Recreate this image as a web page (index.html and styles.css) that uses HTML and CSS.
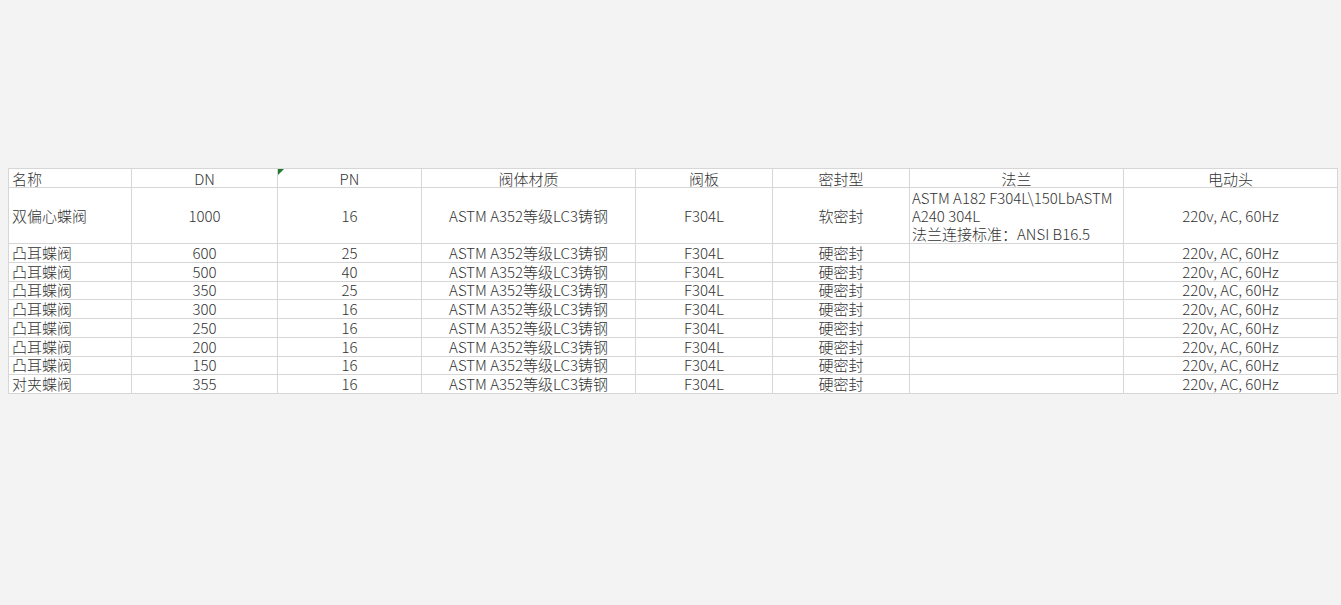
FILE: index.html
```html
<!DOCTYPE html>
<html lang="zh-CN">
<head>
<meta charset="utf-8">
<title>蝶阀</title>
<link rel="stylesheet" href="styles.css">
</head>
<body>
<div class="page">
  <div class="sheet">
    <div class="c l h">名称</div>
    <div class="c h">DN</div>
    <div class="c h flag">PN</div>
    <div class="c h">阀体材质</div>
    <div class="c h">阀板</div>
    <div class="c h">密封型</div>
    <div class="c h">法兰</div>
    <div class="c h">电动头</div>

    <div class="c l tall">双偏心蝶阀</div>
    <div class="c tall">1000</div>
    <div class="c tall">16</div>
    <div class="c tall">ASTM A352等级LC3铸钢</div>
    <div class="c tall">F304L</div>
    <div class="c tall">软密封</div>
    <div class="c l tall multi">ASTM A182 F304L\150LbASTM<br>A240 304L<br>法兰连接标准：ANSI B16.5</div>
    <div class="c tall">220v, AC, 60Hz</div>

    <div class="c l">凸耳蝶阀</div><div class="c">600</div><div class="c">25</div><div class="c">ASTM A352等级LC3铸钢</div><div class="c">F304L</div><div class="c">硬密封</div><div class="c"></div><div class="c">220v, AC, 60Hz</div>
    <div class="c l">凸耳蝶阀</div><div class="c">500</div><div class="c">40</div><div class="c">ASTM A352等级LC3铸钢</div><div class="c">F304L</div><div class="c">硬密封</div><div class="c"></div><div class="c">220v, AC, 60Hz</div>
    <div class="c l">凸耳蝶阀</div><div class="c">350</div><div class="c">25</div><div class="c">ASTM A352等级LC3铸钢</div><div class="c">F304L</div><div class="c">硬密封</div><div class="c"></div><div class="c">220v, AC, 60Hz</div>
    <div class="c l">凸耳蝶阀</div><div class="c">300</div><div class="c">16</div><div class="c">ASTM A352等级LC3铸钢</div><div class="c">F304L</div><div class="c">硬密封</div><div class="c"></div><div class="c">220v, AC, 60Hz</div>
    <div class="c l">凸耳蝶阀</div><div class="c">250</div><div class="c">16</div><div class="c">ASTM A352等级LC3铸钢</div><div class="c">F304L</div><div class="c">硬密封</div><div class="c"></div><div class="c">220v, AC, 60Hz</div>
    <div class="c l">凸耳蝶阀</div><div class="c">200</div><div class="c">16</div><div class="c">ASTM A352等级LC3铸钢</div><div class="c">F304L</div><div class="c">硬密封</div><div class="c"></div><div class="c">220v, AC, 60Hz</div>
    <div class="c l">凸耳蝶阀</div><div class="c">150</div><div class="c">16</div><div class="c">ASTM A352等级LC3铸钢</div><div class="c">F304L</div><div class="c">硬密封</div><div class="c"></div><div class="c">220v, AC, 60Hz</div>
    <div class="c l">对夹蝶阀</div><div class="c">355</div><div class="c">16</div><div class="c">ASTM A352等级LC3铸钢</div><div class="c">F304L</div><div class="c">硬密封</div><div class="c"></div><div class="c">220v, AC, 60Hz</div>
  </div>
</div>
</body>
</html>
```

FILE: styles.css
```css
html, body {
  margin: 0;
  padding: 0;
  background: #f3f3f3;
}

.page {
  width: 1341px;
  height: 605px;
  padding: 168px 0 0 8px;
  box-sizing: border-box;
}

.sheet {
  display: grid;
  grid-template-columns: 122px 145px 143px 213px 136px 136px 213px 213px;
  grid-template-rows: 18px 55px repeat(8, 17.75px);
  gap: 1px;
  width: max-content;
  background: #d6d6d6;
  border: 1px solid #d6d6d6;
  font-family: "Noto Sans CJK SC", "Noto Sans", sans-serif;
  font-size: 15px;
  font-weight: 300;
  color: #333333;
}

.c {
  background: #ffffff;
  display: flex;
  align-items: center;
  justify-content: center;
  line-height: 18px;
  white-space: nowrap;
  position: relative;
}

.h {
  align-items: flex-end;
  line-height: 17px;
}

.l {
  justify-content: flex-start;
  padding-left: 3px;
}

.multi {
  line-height: 18px;
  padding-left: 2px;
}

.flag::before {
  content: "";
  position: absolute;
  left: 0;
  top: 0;
  width: 0;
  height: 0;
  border-top: 6px solid #1f7a2c;
  border-right: 6px solid transparent;
}
```
